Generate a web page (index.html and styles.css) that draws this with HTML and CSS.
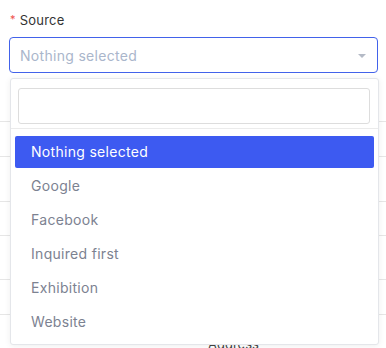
FILE: index.html
```html
<!DOCTYPE html>
<html>
<head>
<meta charset="utf-8">
<link rel="stylesheet" href="styles.css">
</head>
<body>
<div class="page">
  <div class="field">
    <div class="label"><span class="req">*</span>Source</div>
    <div class="select">
      <span class="placeholder">Nothing selected</span>
      <span class="caret"></span>
    </div>
  </div>
  <div class="table">
    <div class="row r1"></div>
    <div class="row r2"></div>
    <div class="row r3"></div>
    <div class="row r4"></div>
    <div class="row r5"></div>
    <div class="row r6"></div>
    <div class="row r7"><span class="addr">Address</span></div>
  </div>
  <div class="dropdown">
    <div class="search"><div class="search-input"></div></div>
    <ul class="options">
      <li class="opt active">Nothing selected</li>
      <li class="opt">Google</li>
      <li class="opt">Facebook</li>
      <li class="opt">Inquired first</li>
      <li class="opt">Exhibition</li>
      <li class="opt">Website</li>
    </ul>
  </div>
</div>
</body>
</html>
```
FILE: styles.css
```css
html, body {
  margin: 0;
  padding: 0;
  background: #ffffff;
}
body {
  font-family: Inter, "Open Sans", sans-serif;
}
.page {
  position: relative;
  width: 386px;
  height: 348px;
  overflow: hidden;
}
.field {
  padding: 10px 8px 0 9px;
}
.label {
  font-size: 13px;
  line-height: 20px;
  height: 20px;
  color: #333333;
  margin-bottom: 7px;
  letter-spacing: 0.2px;
}
.req {
  color: #ef5350;
  font-size: 11px;
  margin-left: 1px;
  margin-right: 4px;
  position: relative;
  top: -2px;
}
.select {
  box-sizing: border-box;
  height: 36px;
  border: 1px solid #4262ea;
  border-radius: 4px;
  padding: 0 11px 0 10px;
  display: flex;
  align-items: center;
  justify-content: space-between;
}
.placeholder {
  font-size: 14px;
  color: #aab6cb;
  letter-spacing: 0.3px;
}
.caret {
  width: 0;
  height: 0;
  border-left: 4px solid transparent;
  border-right: 4px solid transparent;
  border-top: 4px solid #b4bac6;
  margin-top: 1px;
}
.table {
  margin-top: 48px;
}
.row {
  box-sizing: border-box;
  border-top: 1px solid #e6e6e6;
}
.r1 { height: 0; border-top: none; }
.r2 { height: 35px; }
.r3 { height: 45px; }
.r4 { height: 34px; }
.r5 { height: 44px; }
.r6 { height: 35px; }
.r7 { height: 40px; padding-left: 208px; padding-top: 18px; }
.addr {
  font-size: 13px;
  color: #444444;
}
.dropdown {
  position: absolute;
  left: 10px;
  top: 78px;
  width: 369px;
  height: 267px;
  box-sizing: border-box;
  background: #ffffff;
  border: 1px solid #e4e6ea;
  border-radius: 3px;
  box-shadow: 0 1px 6px rgba(0, 0, 0, 0.07);
}
.search {
  padding: 9px 8px 4px 7px;
  border-bottom: 1px solid #ebebeb;
}
.search-input {
  box-sizing: border-box;
  height: 36px;
  border: 1px solid #dddddd;
  border-radius: 3px;
  background: #ffffff;
}
.options {
  list-style: none;
  margin: 0;
  padding: 7px 4px 0 4px;
}
.opt {
  box-sizing: border-box;
  height: 32px;
  line-height: 32px;
  margin-bottom: 2px;
  padding-left: 16px;
  font-size: 14px;
  color: #7c8291;
  border-radius: 2px;
  letter-spacing: 0.3px;
}
.opt.active {
  background: #3d5af1;
  color: #ffffff;
}
```
